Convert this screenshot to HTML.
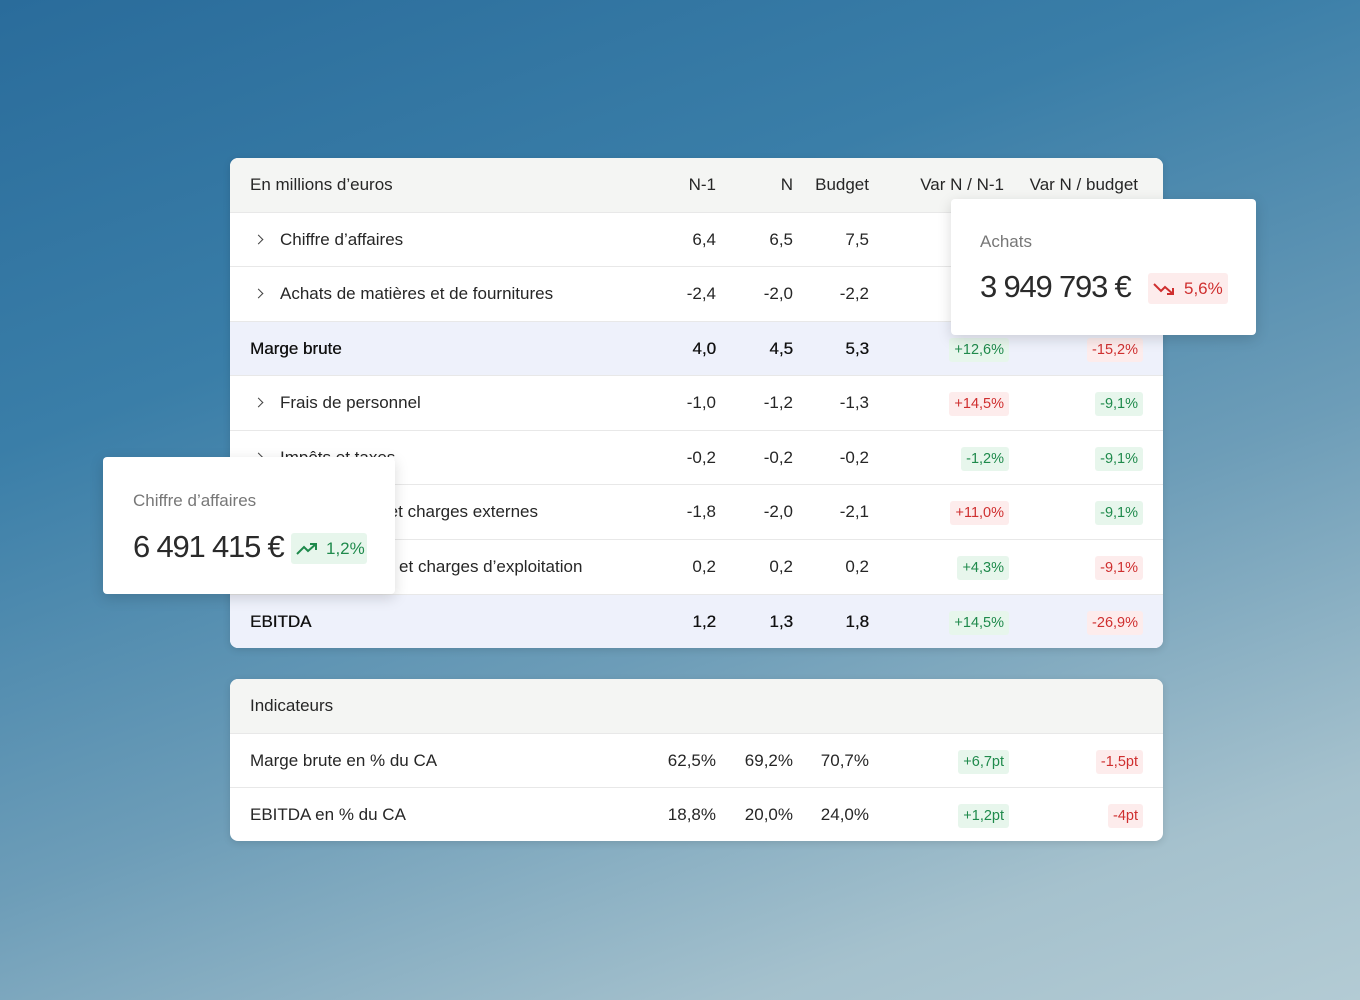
<!DOCTYPE html>
<html><head><meta charset="utf-8"><style>
*{margin:0;padding:0;box-sizing:border-box}
body{width:1360px;height:1000px;overflow:hidden;position:relative;font-family:"Liberation Sans",sans-serif;color:#262626;
background:linear-gradient(160deg,#2a6c9b 0%,#3a7ea8 30%,#6d9db8 60%,#a5c1cd 85%,#b3cbd4 100%);}
.card{position:absolute;background:#fff;border-radius:8px;overflow:hidden;box-shadow:0 2px 8px rgba(0,0,0,.12)}
.row{position:absolute;left:0;right:0;height:54px;border-top:1px solid #e8e8e8;font-size:17px}
.row span{position:absolute;top:0;line-height:54px;white-space:nowrap}
.hd{background:#f4f5f3;border-top:none}
.hl{background:#eef1fb}
.b{color:#111;text-shadow:0.3px 0 0 #111}
.t{position:absolute;top:16px;height:24px;line-height:24px;font-size:14.5px;padding:0 5px;border-radius:3px;font-style:normal;text-shadow:none}
.g{background:#e7f6ec;color:#1f8a4c}
.d{background:#fdecec;color:#cf2f2f}
.chev{position:absolute;left:25px;top:23px;width:7px;height:7px;border-right:1.4px solid #444;border-top:1.4px solid #444;transform:rotate(45deg)}
.pop{position:absolute;background:#fff;border-radius:4px;box-shadow:0 4px 14px rgba(0,0,0,.15)}
.big{position:absolute;font-size:31px;letter-spacing:-1.2px;color:#2a2a2a}
</style></head><body>
<div class="card" style="left:230px;top:158px;width:933px;height:490px">
 <div class="row hd" style="top:0"><span style="left:20px">En millions d’euros</span><span style="right:447px">N-1</span><span style="right:370px">N</span><span style="right:294px">Budget</span><span style="right:159px">Var N / N-1</span><span style="right:25px">Var N / budget</span></div>
 <div class="row" style="top:54px"><i class="chev"></i><span style="left:50px">Chiffre d’affaires</span><span style="right:447px">6,4</span><span style="right:370px">6,5</span><span style="right:294px">7,5</span></div>
 <div class="row" style="top:108px"><i class="chev"></i><span style="left:50px">Achats de matières et de fournitures</span><span style="right:447px">-2,4</span><span style="right:370px">-2,0</span><span style="right:294px">-2,2</span></div>
 <div class="row hl b" style="top:163px"><span style="left:20px">Marge brute</span><span style="right:447px">4,0</span><span style="right:370px">4,5</span><span style="right:294px">5,3</span><i class="t g" style="right:154px">+12,6%</i><i class="t d" style="right:20px">-15,2%</i></div>
 <div class="row" style="top:217px"><i class="chev"></i><span style="left:50px">Frais de personnel</span><span style="right:447px">-1,0</span><span style="right:370px">-1,2</span><span style="right:294px">-1,3</span><i class="t d" style="right:154px">+14,5%</i><i class="t g" style="right:20px">-9,1%</i></div>
 <div class="row" style="top:272px"><i class="chev"></i><span style="left:50px">Impôts et taxes</span><span style="right:447px">-0,2</span><span style="right:370px">-0,2</span><span style="right:294px">-0,2</span><i class="t g" style="right:154px">-1,2%</i><i class="t g" style="right:20px">-9,1%</i></div>
 <div class="row" style="top:326px"><i class="chev"></i><span style="left:50px">Autres achats et charges externes</span><span style="right:447px">-1,8</span><span style="right:370px">-2,0</span><span style="right:294px">-2,1</span><i class="t d" style="right:154px">+11,0%</i><i class="t g" style="right:20px">-9,1%</i></div>
 <div class="row" style="top:381px"><i class="chev"></i><span style="left:50px">Autres produits et charges d’exploitation</span><span style="right:447px">0,2</span><span style="right:370px">0,2</span><span style="right:294px">0,2</span><i class="t g" style="right:154px">+4,3%</i><i class="t d" style="right:20px">-9,1%</i></div>
 <div class="row hl b" style="top:436px"><span style="left:20px">EBITDA</span><span style="right:447px">1,2</span><span style="right:370px">1,3</span><span style="right:294px">1,8</span><i class="t g" style="right:154px">+14,5%</i><i class="t d" style="right:20px">-26,9%</i></div>
</div>
<div class="card" style="left:230px;top:679px;width:933px;height:162px">
 <div class="row hd" style="top:0"><span style="left:20px">Indicateurs</span></div>
 <div class="row" style="top:54px"><span style="left:20px">Marge brute en % du CA</span><span style="right:447px">62,5%</span><span style="right:370px">69,2%</span><span style="right:294px">70,7%</span><i class="t g" style="right:154px">+6,7pt</i><i class="t d" style="right:20px">-1,5pt</i></div>
 <div class="row" style="top:108px"><span style="left:20px">EBITDA en % du CA</span><span style="right:447px">18,8%</span><span style="right:370px">20,0%</span><span style="right:294px">24,0%</span><i class="t g" style="right:154px">+1,2pt</i><i class="t d" style="right:20px">-4pt</i></div>
</div>
<div class="pop" style="left:951px;top:199px;width:305px;height:136px">
 <div style="position:absolute;left:29px;top:33px;font-size:17px;color:#777">Achats</div>
 <div class="big" style="left:29px;top:70px">3 949 793 €</div>
 <div style="position:absolute;left:197px;top:74px;height:31px;width:80px;border-radius:3px;background:#fdecec;color:#cf2f2f;font-size:17px;line-height:31px;padding-left:36px">5,6%
  <svg style="position:absolute;left:5px;top:8px" width="24" height="16" viewBox="0 0 24 16"><path d="M1 3 L8 10 L12 6 L20 13 M14 13 H20 V7" fill="none" stroke="#cf2f2f" stroke-width="2"/></svg></div>
</div>
<div class="pop" style="left:103px;top:457px;width:292px;height:137px">
 <div style="position:absolute;left:30px;top:34px;font-size:17px;color:#777">Chiffre d’affaires</div>
 <div class="big" style="left:30px;top:72px">6 491 415 €</div>
 <div style="position:absolute;left:188px;top:76px;height:31px;width:76px;border-radius:3px;background:#e7f6ec;color:#1f8a4c;font-size:17px;line-height:31px;padding-left:35px">1,2%
  <svg style="position:absolute;left:5px;top:8px" width="24" height="16" viewBox="0 0 24 16"><path d="M1 13 L8 6 L12 10 L20 3 M14 3 H20 V9" fill="none" stroke="#1f8a4c" stroke-width="2"/></svg></div>
</div>
</body></html>
